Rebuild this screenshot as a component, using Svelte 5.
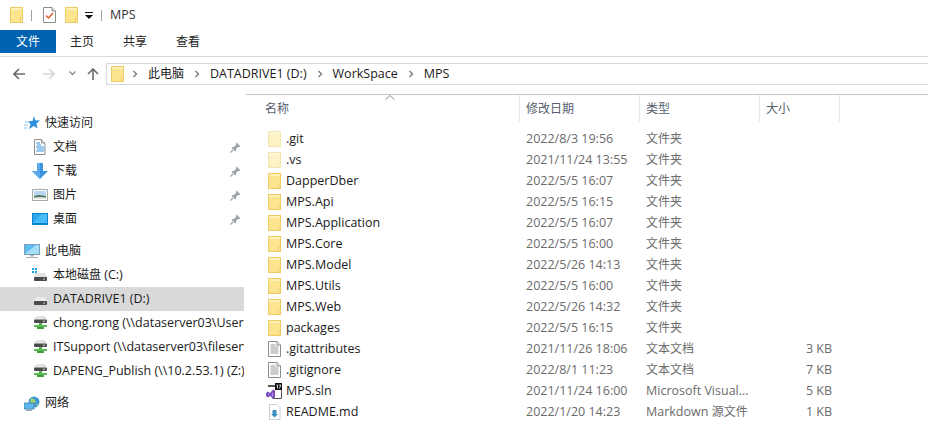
<script>
  const quick = [
    { label: '文档', icon: 'doc' },
    { label: '下载', icon: 'down' },
    { label: '图片', icon: 'pic' },
    { label: '桌面', icon: 'desk' }
  ];
  const drives = [
    { label: '本地磁盘 (C:)', icon: 'sys' },
    { label: 'DATADRIVE1 (D:)', icon: 'drive', active: true },
    { label: 'chong.rong (\\\\dataserver03\\Users) (X:)', icon: 'net' },
    { label: 'ITSupport (\\\\dataserver03\\fileserver) (Y:)', icon: 'net' },
    { label: 'DAPENG_Publish (\\\\10.2.53.1) (Z:)', icon: 'net' }
  ];
  const files = [
    { name: '.git', date: '2022/8/3 19:56', type: '文件夹', icon: 'ghost' },
    { name: '.vs', date: '2021/11/24 13:55', type: '文件夹', icon: 'ghost' },
    { name: 'DapperDber', date: '2022/5/5 16:07', type: '文件夹', icon: 'folder' },
    { name: 'MPS.Api', date: '2022/5/5 16:15', type: '文件夹', icon: 'folder' },
    { name: 'MPS.Application', date: '2022/5/5 16:07', type: '文件夹', icon: 'folder' },
    { name: 'MPS.Core', date: '2022/5/5 16:00', type: '文件夹', icon: 'folder' },
    { name: 'MPS.Model', date: '2022/5/26 14:13', type: '文件夹', icon: 'folder' },
    { name: 'MPS.Utils', date: '2022/5/5 16:00', type: '文件夹', icon: 'folder' },
    { name: 'MPS.Web', date: '2022/5/26 14:32', type: '文件夹', icon: 'folder' },
    { name: 'packages', date: '2022/5/5 16:15', type: '文件夹', icon: 'folder' },
    { name: '.gitattributes', date: '2021/11/26 18:06', type: '文本文档', size: '3 KB', icon: 'text' },
    { name: '.gitignore', date: '2022/8/1 11:23', type: '文本文档', size: '7 KB', icon: 'text' },
    { name: 'MPS.sln', date: '2021/11/24 16:00', type: 'Microsoft Visual...', size: '5 KB', icon: 'sln' },
    { name: 'README.md', date: '2022/1/20 14:23', type: 'Markdown 源文件', size: '1 KB', icon: 'md' }
  ];
  const crumbs = ['此电脑', 'DATADRIVE1 (D:)', 'WorkSpace', 'MPS'];
  const runs = (s) => s.match(/[\u4e00-\u9fff]+|[^\u4e00-\u9fff]+/g) ?? [];
  const isCjk = (s) => /[\u4e00-\u9fff]/.test(s);
</script>

{#snippet t(text)}
  {#each runs(text) as r}<span class:cjk={isCjk(r)}>{r}</span>{/each}
{/snippet}

{#snippet folder(op = 1)}
  <svg class="ic-folder" width="13" height="16" viewBox="0 0 13 16" opacity={op}>
    <rect x="0.5" y="0.5" width="12" height="15" fill="#fde58f" stroke="#eecb62" />
    <rect x="1" y="1" width="11" height="2" fill="#fff0b8" />
    <path d="M10.5 15.5v-4h2" fill="#fff3c4" stroke="#eecb62" />
  </svg>
{/snippet}

{#snippet chev()}
  <svg class="chev" width="6" height="8" viewBox="0 0 6 8"><path d="M1.5 1l3 3-3 3" fill="none" stroke="#777" stroke-width="1.3" /></svg>
{/snippet}

{#snippet pin()}
  <svg class="pin" width="11" height="11" viewBox="0 0 11 11">
    <path d="M6.5 0.5l4 4-1.2.6-1.2-.2L6 7l.2 1.6-1 .8L1.7 5.8l.8-1L4 5l2.1-2.2-.2-1.2z" fill="#9aa3ab" />
    <path d="M3 7.8L.5 10.5" stroke="#9aa3ab" stroke-width="1.2" />
  </svg>
{/snippet}

{#snippet navIcon(k)}
  <svg class="nav-ic" width="16" height="16" viewBox="0 0 16 16">
    {#if k === 'doc'}
      <path d="M2.5 .5h7l3.5 3.5v11.5h-10.500z" fill="#fff" stroke="#8f8f8f" />
      <path d="M9.500.5v3.500h3.500" fill="#eee" stroke="#8f8f8f" />
      <path d="M4 4h4M5 6h4M4 8h8M5 10h7M4 12h8" stroke="#3a94d8" stroke-width="1" />
    {:else if k === 'down'}
      <path d="M5 0h6v8h5l-8 8-8-8h5z" fill="#3d95e0" />
      <path d="M5 0h3v16l-8-8h5z" fill="#5aa9ec" />
    {:else if k === 'pic'}
      <rect x=".5" y="2.500" width="15" height="11" fill="#fff" stroke="#a9a9a9" />
      <rect x="2" y="4" width="12" height="8" fill="#b8d4ee" />
      <path d="M2 9l5-1 7 1v3H2z" fill="#4f7760" />
      <path d="M2 10.500l6-.5 6 .5V12H2z" fill="#e3e6dc" />
    {:else if k === 'desk'}
      <rect x="0" y="2" width="16" height="12" fill="#0a84cf" />
      <rect x="1" y="3" width="14" height="9" fill="#2ea6ee" />
      <path d="M1 12l9-9h5v9z" fill="#49bdf8" />
    {:else if k === 'sys'}
      <path d="M0 1h2v2H0zM3 1h2v2H3zM0 4h2v2H0zM3 4h2v2H3z" fill="#19a6ea" />
      <path d="M4 6h9l2 4H2z" fill="#e2e2e2" />
      <rect x="2" y="10" width="13" height="4" rx="1" fill="#4a4a4a" />
      <rect x="11" y="11.500" width="2" height="1" fill="#d8d8d8" />
    {:else if k === 'drive'}
      <path d="M4 6h9l2 4H2z" fill="#ececec" />
      <rect x="2" y="10" width="13" height="4" rx="1" fill="#4a4a4a" />
      <rect x="11" y="11.500" width="2" height="1" fill="#d8d8d8" />
    {:else if k === 'net'}
      <path d="M4 1h9l2 3.500H2z" fill="#e2e2e2" />
      <rect x="2" y="4.500" width="13" height="3.500" rx="1" fill="#4a4a4a" />
      <rect x="11" y="5.700" width="2" height="1" fill="#e0e0e0" />
      <path d="M7 8h3v2H7z" fill="#4fae4c" />
      <path d="M2 10h13v2H2z" fill="#5dbb55" />
      <path d="M5 12h7v2H5z" fill="#3f9f3d" />
    {/if}
  </svg>
{/snippet}

{#snippet fileIcon(k)}
  {#if k === 'folder'}
    {@render folder()}
  {:else if k === 'ghost'}
    {@render folder(0.5)}
  {:else if k === 'text'}
    <svg class="ic-folder" width="13" height="16" viewBox="0 0 13 16">
      <path d="M.5.5h8.500l3.500 3.500v11.500H.5z" fill="#fff" stroke="#8c8c8c" />
      <path d="M9 .5V4h3.500" fill="#eee" stroke="#8c8c8c" />
      <path d="M2.500 4h5M2.500 6h8M2.500 8h8M2.500 10h8M2.500 12h8" stroke="#9a9a9a" />
    </svg>
  {:else if k === 'sln'}
    <svg class="ic-sln" width="16" height="16" viewBox="0 0 16 16">
      <path d="M2.500 2.500h13v13h-9" fill="#fff" stroke="#555" />
      <rect x="2" y="2" width="7" height="2" fill="#555" />
      <rect x="9" y="0" width="7" height="7" fill="#111" />
      <path d="M10.500 2h1v3.500M12.800 2h2L13.400 5.500" fill="none" stroke="#fff" stroke-width=".8" />
      <path d="M0 10l2-1.500L4 10l3-3.500 2 1v7l-2 1L4 13l-2 1.500L0 13z" fill="#7b4fc0" />
      <path d="M2 10.500v2l1-1zM7 9l-1.500 2.500L7 14z" fill="#b79ae4" />
    </svg>
  {:else if k === 'md'}
    <svg class="ic-folder" width="13" height="16" viewBox="0 0 13 16">
      <path d="M1.500.5h7.500l3 3v12H1.500z" fill="#fff" stroke="#c4ccd4" />
      <path d="M4.500 6h4v4h1.500l-3.500 3.500L3 10h1.500z" fill="#3d8fc0" />
    </svg>
  {/if}
{/snippet}

<div class="win">
  <div class="title">
    {@render folder()}
    <span class="sep"></span>
    <svg class="qa-doc" width="13" height="16" viewBox="0 0 13 16">
      <path d="M.5.5h8.500l3.500 3.500v11.500H.5z" fill="#fff" stroke="#8c8c8c" />
      <path d="M9 .5V4h3.500" fill="#eee" stroke="#8c8c8c" />
      <path d="M3 8.500l2.500 2.500L10 6" fill="none" stroke="#e2562a" stroke-width="1.400" />
    </svg>
    {@render folder()}
    <svg class="qa-drop" width="8" height="7" viewBox="0 0 8 7">
      <path d="M0 0h8v1H0zM0 3h8L4 7z" fill="#111" />
    </svg>
    <span class="sep sep2"></span>
    <span class="title-text">MPS</span>
  </div>

  <div class="tabs">
    <span class="tab-file cjk">文件</span>
    <span class="tab cjk">主页</span>
    <span class="tab cjk">共享</span>
    <span class="tab cjk">查看</span>
  </div>

  <div class="addr-row">
    <svg class="arrow back" width="12" height="12" viewBox="0 0 12 12"><path d="M6 1L1 6l5 5M1 6h11" fill="none" stroke="#6b6b6b" stroke-width="1.600" /></svg>
    <svg class="arrow fwd" width="12" height="12" viewBox="0 0 12 12"><path d="M6 1l5 5-5 5M11 6H0" fill="none" stroke="#d4d4d4" stroke-width="1.600" /></svg>
    <svg class="arrow drop" width="7" height="5" viewBox="0 0 7 5"><path d="M.5 .5l3 3 3-3" fill="none" stroke="#8a8a8a" stroke-width="1.300" /></svg>
    <svg class="arrow up" width="12" height="12" viewBox="0 0 12 12"><path d="M1 6l5-5 5 5M6 1v11" fill="none" stroke="#6b6b6b" stroke-width="1.600" /></svg>
    <div class="addr">
      {@render folder()}
      {#each crumbs as c}
        {@render chev()}
        <span class="crumb">{@render t(c)}</span>
      {/each}
    </div>
  </div>

  <div class="body">
    <nav class="side">
      <div class="sec first">
        <svg class="sec-ic" width="16" height="14" viewBox="0 0 16 14">
          <path d="M10 0l1.300 4.300 4.700.3-3.600 3 1.200 5-3.900-2.700L5 13l1.500-5L4 5.500l4.700-.8z" fill="#2f8fdc" />
          <path d="M1 6h3M0 9h4M0 12h3" stroke="#8cc4ee" />
        </svg>
        <span>{@render t('快速访问')}</span>
      </div>
      {#each quick as q}
        <div class="item">
          {@render navIcon(q.icon)}
          <span class="lbl">{@render t(q.label)}</span>
          {@render pin()}
        </div>
      {/each}
      <div class="sec gap">
        <svg class="sec-ic" width="16" height="14" viewBox="0 0 16 14">
          <rect x=".5" y=".5" width="15" height="10" fill="#5dbcf0" stroke="#7b9db5" />
          <path d="M1 10L12 1h3v9z" fill="#a6def8" />
          <path d="M6 11h4v1.500H6zM2 13h12v1H2z" fill="#a9b6bf" />
        </svg>
        <span>{@render t('此电脑')}</span>
      </div>
      {#each drives as d}
        <div class="item" class:active={d.active}>
          {@render navIcon(d.icon)}
          <span class="lbl">{@render t(d.label)}</span>
        </div>
      {/each}
      <div class="sec gap">
        <svg class="sec-ic" width="16" height="15" viewBox="0 0 16 15">
          <circle cx="10" cy="6" r="5.500" fill="#3f97d8" />
          <path d="M7 2l3 1 2 3-3 2-3-2zM13 7l1 2-2 1z" fill="#9fd06e" />
          <rect x="0" y="7" width="10" height="6" fill="#5cb6ea" stroke="#4d7fa3" stroke-width=".8" />
          <rect x="2" y="13.500" width="6" height="1.500" fill="#8aa2b3" />
        </svg>
        <span>{@render t('网络')}</span>
      </div>
    </nav>

    <main class="list">
      <svg class="sort" width="10" height="5" viewBox="0 0 10 5"><path d="M.5 4.500L5 .5l4.500 4" fill="none" stroke="#8e8e8e" /></svg>
      <div class="row head">
        <span class="c-name">{@render t('名称')}</span>
        <span class="c-date">{@render t('修改日期')}</span>
        <span class="c-type">{@render t('类型')}</span>
        <span class="c-size">{@render t('大小')}</span>
      </div>
      <div class="rows">
        {#each files as f}
          <div class="row">
            <span class="c-name">
              <span class="fi">{@render fileIcon(f.icon)}</span>
              <span class="fname">{f.name}</span>
            </span>
            <span class="c-date">{f.date}</span>
            <span class="c-type">{@render t(f.type)}</span>
            <span class="c-size">{f.size ?? ''}</span>
          </div>
        {/each}
      </div>
    </main>
  </div>
</div>

<style>
  :global(body) { margin: 0; background: #fff; }
  .win {
    width: 928px;
    height: 432px;
    overflow: hidden;
    background: #fff;
    font: 12.5px/16px "Open Sans", "Noto Sans CJK SC", sans-serif;
    color: #1a1a1a;
    display: flex;
    flex-direction: column;
  }
  .cjk { font-size: 12px; }
  .title {
    height: 30px;
    display: flex;
    align-items: center;
    padding-left: 10px;
    box-sizing: border-box;
  }
  .sep { width: 1px; height: 11px; background: #a0a0a0; margin: 0 11px 0 8px; flex: none; }
  .qa-doc { margin-right: 9px; }
  .qa-drop { margin-left: 7px; }
  .sep2 { margin: 0 8px 0 8px; }
  .title-text { color: #333; }

  .tabs {
    height: 23px;
    display: flex;
    align-items: center;
  }
  .tab-file {
    width: 56px;
    height: 23px;
    line-height: 24px;
    background: #0063b1;
    color: #fff;
    text-align: center;
    margin-right: 14px;
  }
  .tab { width: 24px; margin-right: 29px; color: #222; }

  .addr-row {
    height: 23px;
    margin-top: 3px;
    border-top: 1px solid #dadada;
    padding-top: 5px;
    display: flex;
    align-items: center;
    position: relative;
  }
  .arrow { flex: none; }
  .back { margin-left: 13px; }
  .fwd { margin-left: 18px; }
  .drop { margin-left: 14px; }
  .up { margin-left: 11px; }
  .addr {
    flex: 1;
    height: 22px;
    margin-left: 7px;
    border: 1px solid #d9d9d9;
    border-right: none;
    box-sizing: border-box;
    display: flex;
    align-items: center;
    padding-left: 4px;
  }
  .chev { margin: 0 10px 0 10px; flex: none; }
  .ic-folder + .chev { margin-left: 8px; }
  .crumb { color: #1a1a1a; }

  .body {
    flex: 1;
    display: flex;
    margin-top: 9px;
    min-height: 0;
  }
  .side {
    width: 244px;
    flex: none;
    overflow: hidden;
    margin-right: 2px;
    padding-top: 17px;
    box-sizing: border-box;
  }
  .sec {
    height: 24px;
    display: flex;
    align-items: center;
    padding-left: 24px;
    color: #222;
    white-space: nowrap;
  }
  .sec.gap { margin-top: 8px; }
  .sec-ic { margin-right: 5px; flex: none; }
  .item {
    height: 24px;
    display: flex;
    align-items: center;
    padding-left: 32px;
    white-space: nowrap;
    position: relative;
    overflow: hidden;
  }
  .item.active { background: #d9d9d9; }
  .nav-ic { margin-right: 5px; flex: none; }
  .lbl { flex: 1; min-width: 0; }
  .pin { margin-right: 3px; flex: none; }

  .list { flex: 1; position: relative; min-width: 0; border-top: 1px solid #c6c6c6; }
  .sort { position: absolute; left: 139px; top: 0; }
  .row {
    display: flex;
    align-items: center;
    height: 21px;
    color: #6b6b6b;
    white-space: nowrap;
  }
  .head { height: 27px; color: #55606e; align-items: stretch; }
  .head span.c-name, .head span.c-date, .head span.c-type, .head span.c-size {
    padding-top: 6px;
    box-sizing: border-box;
    border-right: 1px solid #e5e5e5;
    color: #55606e;
    align-items: flex-start;
  }
  .rows { padding-top: 6px; }
  .c-name {
    width: 274px;
    box-sizing: border-box;
    padding-left: 19px;
    display: flex;
    align-items: center;
    color: #1a1a1a;
  }
  .c-date { width: 120px; padding-left: 6px; box-sizing: border-box; }
  .c-type { width: 120px; padding-left: 6px; box-sizing: border-box; }
  .c-size { width: 80px; padding-right: 8px; box-sizing: border-box; text-align: right; }
  .head .c-size { text-align: left; padding-left: 6px; padding-right: 0; }
  .fi { width: 17px; margin-left: 3px; display: flex; flex: none; }
  .ic-sln { margin-left: -2px; flex: none; }
  .fname { margin-left: 1px; }
</style>
